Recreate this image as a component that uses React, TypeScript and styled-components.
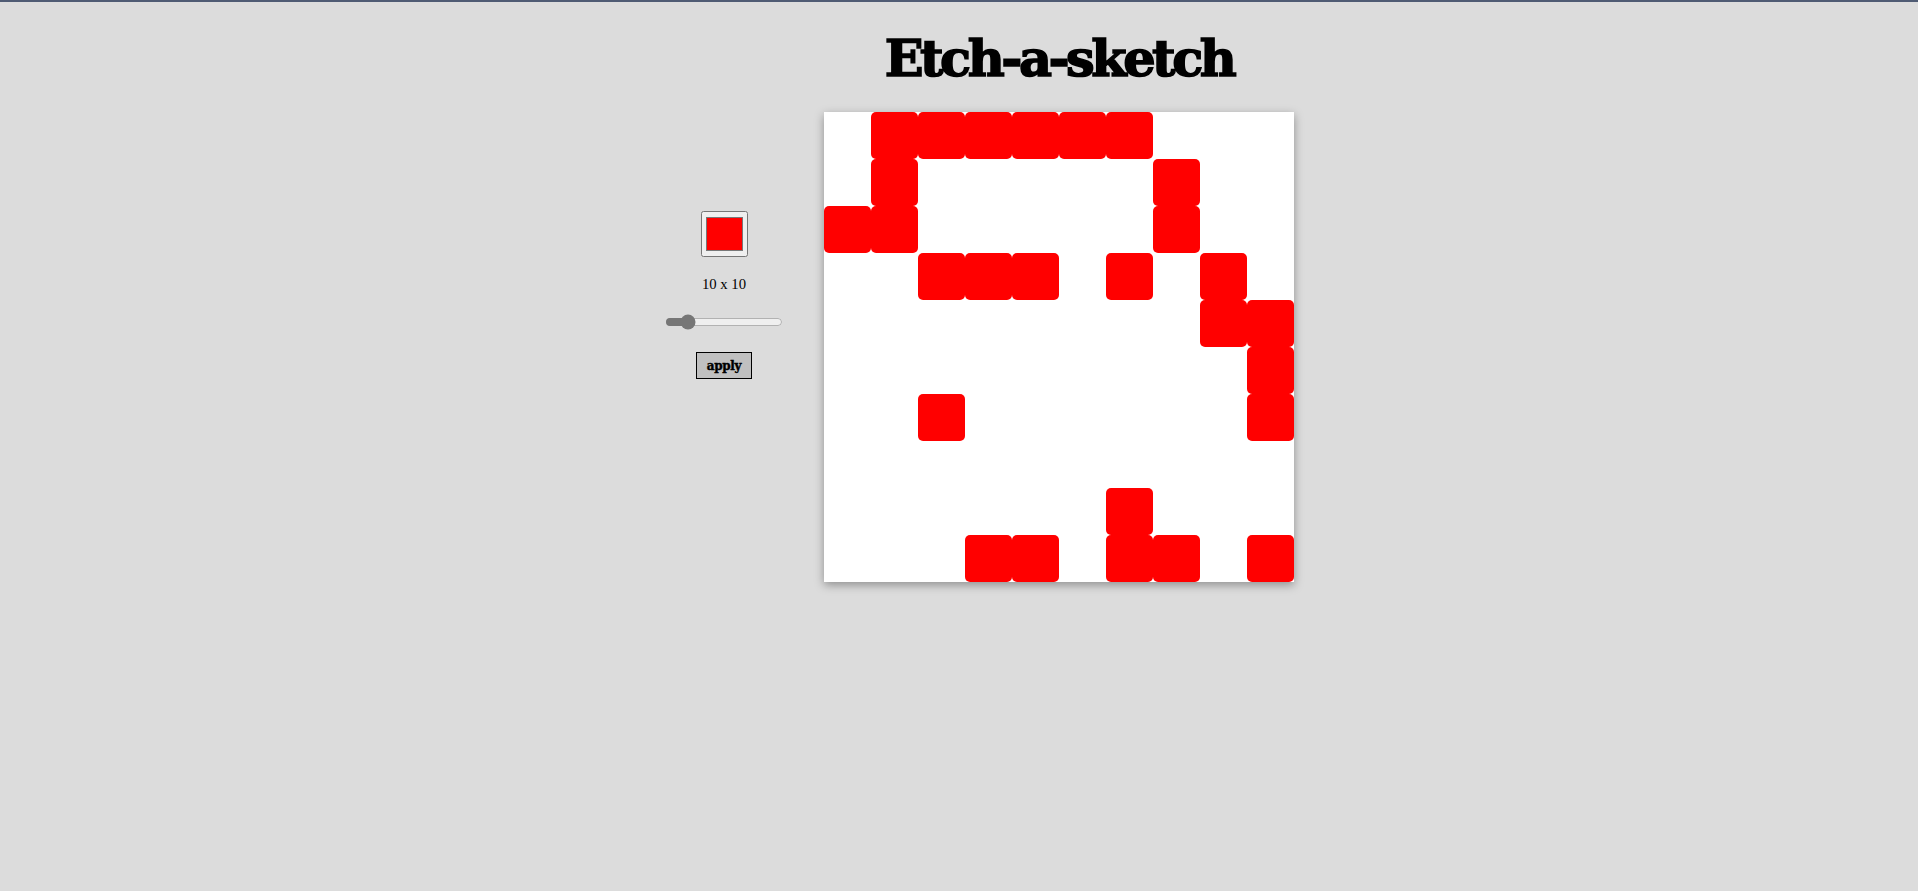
import React, { useState } from "react";
import styled, { createGlobalStyle } from "styled-components";

const GlobalStyle = createGlobalStyle`
  html, body {
    margin: 0;
    padding: 0;
    background: #dcdcdc;
    min-height: 100%;
  }
  body {
    border-top: 2px solid #4f5b73;
    font-family: "Liberation Serif", "Times New Roman", serif;
    min-height: 889px;
  }
`;

const Page = styled.main`
  display: grid;
  grid-template-columns: 200px 470px;
  grid-template-rows: 110px auto;
  justify-content: center;
`;

const Title = styled.h1`
  grid-column: 2;
  grid-row: 1;
  margin: 0;
  padding-top: 31px;
  box-sizing: border-box;
  text-align: center;
  font-family: "DejaVu Serif", serif;
  font-weight: 900;
  font-size: 51px;
  line-height: 51px;
  letter-spacing: -3.5px;
  -webkit-text-stroke: 1.6px #000;
  color: #000;
  white-space: nowrap;
`;

const Sidebar = styled.aside`
  grid-column: 1;
  grid-row: 2;
  display: flex;
  flex-direction: column;
  align-items: center;
  padding-top: 99px;
`;

const ColorPicker = styled.input`
  width: 47px;
  height: 46px;
  margin: 0;
  cursor: pointer;
`;

const SizeLabel = styled.p`
  margin: 19px 0 0;
  font-family: "Liberation Serif", serif;
  font-size: 14.7px;
  line-height: 17px;
  color: #000;
`;

const Slider = styled.input`
  width: 118px;
  margin: 21px 0 0;
  accent-color: #767676;
`;

const ApplyButton = styled.button`
  margin-top: 22px;
  width: 56px;
  height: 27px;
  padding: 0;
  background: #c0c0c0;
  border: 1px solid #000;
  font-family: "DejaVu Serif", serif;
  font-weight: 900;
  font-size: 12px;
  letter-spacing: -0.3px;
  -webkit-text-stroke: 0.4px #000;
  color: #000;
  cursor: pointer;
`;

const Board = styled.div<{ $size: number }>`
  grid-column: 2;
  grid-row: 2;
  width: 470px;
  height: 470px;
  background: #fff;
  display: grid;
  grid-template-columns: repeat(${(p) => p.$size}, 1fr);
  grid-template-rows: repeat(${(p) => p.$size}, 1fr);
  box-shadow: 0 3px 9px rgba(0, 0, 0, 0.35);
`;

const Cell = styled.div<{ $on: boolean; $color: string }>`
  border-radius: 5px;
  background: ${(p) => (p.$on ? p.$color : "transparent")};
`;

const FILLED: Record<number, number[]> = {
  0: [1, 2, 3, 4, 5, 6],
  1: [1, 7],
  2: [0, 1, 7],
  3: [2, 3, 4, 6, 8],
  4: [8, 9],
  5: [9],
  6: [2, 9],
  7: [],
  8: [6],
  9: [3, 4, 6, 7, 9],
};

export default function App() {
  const [color, setColor] = useState("#ff0000");
  const [size, setSize] = useState(10);
  const [pending, setPending] = useState(10);
  const [cells, setCells] = useState<boolean[]>(() => {
    const arr: boolean[] = [];
    for (let r = 0; r < 10; r++)
      for (let c = 0; c < 10; c++) arr.push(FILLED[r].includes(c));
    return arr;
  });

  const apply = () => {
    setSize(pending);
    setCells(new Array(pending * pending).fill(false));
  };

  const paint = (i: number) => {
    setCells((prev) => {
      if (prev[i]) return prev;
      const next = prev.slice();
      next[i] = true;
      return next;
    });
  };

  return (
    <>
      <GlobalStyle />
      <Page>
        <Title>Etch-a-sketch</Title>
        <Sidebar>
          <ColorPicker
            type="color"
            value={color}
            onChange={(e) => setColor(e.target.value)}
          />
          <SizeLabel>
            {pending} x {pending}
          </SizeLabel>
          <Slider
            type="range"
            min={1}
            max={64}
            value={pending}
            onChange={(e) => setPending(Number(e.target.value))}
          />
          <ApplyButton onClick={apply}>apply</ApplyButton>
        </Sidebar>
        <Board $size={size}>
          {cells.map((on, i) => (
            <Cell key={i} $on={on} $color={color} onMouseEnter={() => paint(i)} />
          ))}
        </Board>
      </Page>
    </>
  );
}
